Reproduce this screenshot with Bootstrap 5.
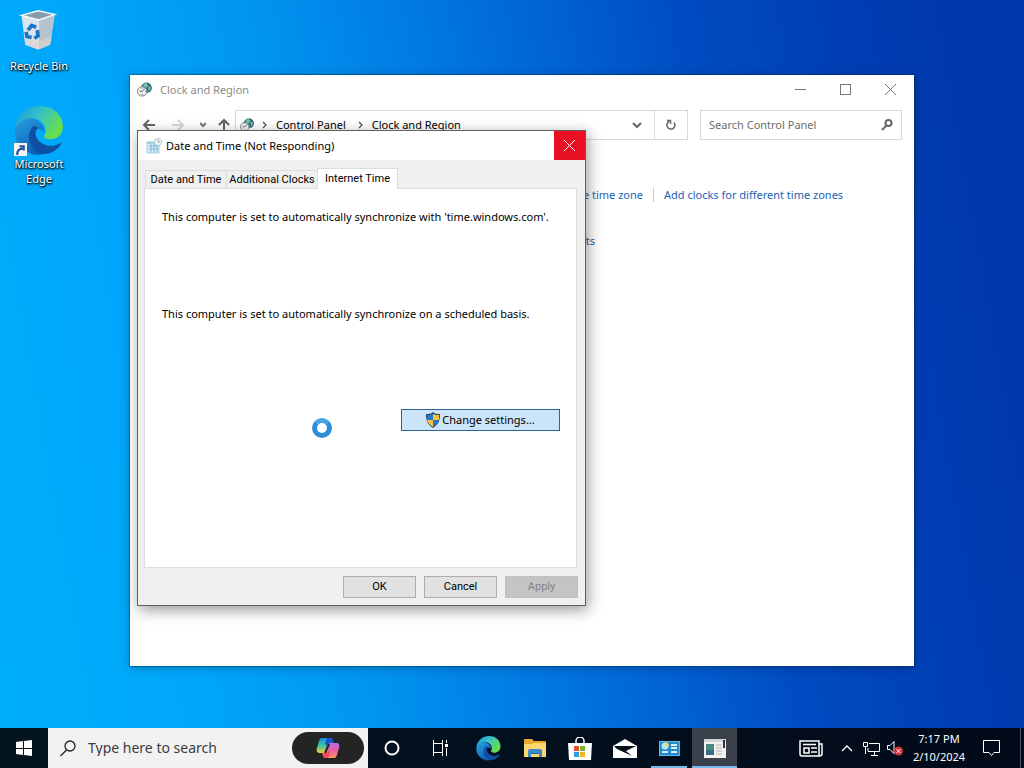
<!DOCTYPE html>
<html lang="en">
<head>
    <meta charset="UTF-8">
    <meta name="viewport" content="width=device-width, initial-scale=1.0">
    <title>Date and Time</title>
    <link href="https://cdn.jsdelivr.net/npm/bootstrap@5.3.0/dist/css/bootstrap.min.css" rel="stylesheet">
    <style>
        body {
            font-family: "Noto Sans", "Open Sans", sans-serif;
            font-size: 11px;
            line-height: 16px;
            color: #000;
            background: linear-gradient(80deg, #00b0fa 0%, #00a6fb 18%, #0094f0 34%, #006edc 53%, #004cc2 70%, #003cb2 86%, #0036a8 100%);
        }
        button {
            font: inherit;
            color: inherit;
            background: none;
            border: 0;
            padding: 0;
        }
        svg {
            display: block;
            flex: none;
        }
        .desktop-area {
            min-height: 0;
        }

        /* Desktop shortcuts */
        .shortcuts {
            width: 78px;
            padding-top: 8px;
        }
        .shortcut {
            color: #fff;
            line-height: 15px;
            text-shadow: 1px 1px 2px #000, 0 1px 2px #000;
            text-decoration: none;
        }
        .shortcut-edge {
            margin-top: 33px;
        }

        /* Windows */
        .win {
            position: absolute;
            background: #fff;
        }
        .win-explorer {
            left: 130px;
            top: 75px;
            width: 784px;
            height: 591px;
            box-shadow: 0 0 1px 1px rgba(0, 40, 90, .35), 0 2px 10px rgba(0, 0, 0, .25);
        }
        .win-dialog {
            left: 137px;
            top: 130px;
            width: 449px;
            height: 476px;
            border: 1px solid #5f5f5f;
            background: #f0f0f0;
            box-shadow: 2px 4px 14px rgba(0, 0, 0, .4);
        }
        .win-explorer .caption {
            height: 29px;
            padding: 0 1px 0 7px;
            color: #8c8c8c;
        }
        .caption-btn {
            width: 45px;
            height: 29px;
        }
        .nav-row {
            height: 41px;
            padding: 6px 12px 5px 10px;
        }
        .nav-arrows {
            width: 95px;
        }
        .address, .search-box {
            border: 1px solid #d9d9d9;
            height: 30px;
        }
        .search-box {
            width: 202px;
        }
        .search-box input {
            border: 0;
            outline: 0;
            min-width: 0;
            padding: 0;
        }
        .search-box input::placeholder {
            color: #6d6d6d;
            opacity: 1;
        }
        .refresh {
            width: 33px;
            border-left: 1px solid #d9d9d9;
        }
        .tasks {
            padding-top: 42px;
        }
        .tasks a {
            color: #1a62b5;
            text-decoration: none;
        }
        .task-zone {
            width: 513px;
        }
        .task-region {
            width: 465px;
            padding-top: 30px;
        }
        .task-divider {
            border-left: 1px solid #ccc;
            height: 14px;
            margin: 0 10px;
        }

        /* Dialog */
        .win-dialog .caption {
            height: 29px;
            background: #fff;
        }
        .close-red {
            width: 31px;
            height: 29px;
            background: #e81123;
        }
        .dialog-body {
            padding: 8px 7px 8px 6px;
        }
        .tab-strip, .push {
            font-family: Roboto, "Noto Sans", sans-serif;
        }
        .tab-strip {
            height: 20px;
            padding-left: 1px;
        }
        .tab-strip button {
            height: 18px;
            border: 1px solid #dcdcdc;
            border-bottom: 0;
            border-right: 0;
            line-height: 18px;
            white-space: nowrap;
        }
        .tab-strip .current {
            width: 81px;
            height: 21px;
            background: #fff;
            border-right: 1px solid #dcdcdc;
            z-index: 1;
            margin-bottom: -1px;
        }
        .tab-one {
            width: 81px;
        }
        .tab-two {
            width: 91px;
        }
        .sheet {
            background: #fff;
            border: 1px solid #dcdcdc;
            height: 380px;
            margin-right: 1px;
            padding: 20px 16px 0 17px;
        }
        .sheet p {
            margin: 0;
            white-space: nowrap;
        }
        .sheet .schedule {
            margin-top: 81px;
        }
        .btn-shield {
            width: 159px;
            height: 22px;
            margin-top: 87px;
            border: 1px solid #2b6391;
            background: #cce4f7;
            gap: 2px;
        }
        .push {
            width: 73px;
            height: 22px;
            border: 1px solid #adadad;
            background: #e1e1e1;
        }
        .push:disabled {
            background: #c4c4c4;
            border-color: #bfbfbf;
            color: #838383;
        }
        .busy {
            position: absolute;
            left: 312px;
            top: 418px;
            width: 20px;
            height: 20px;
            border: 5px solid #2e8fd8;
            border-top-color: #48a4e6;
            border-radius: 50%;
        }

        /* Taskbar */
        .taskbar {
            height: 40px;
            background: linear-gradient(90deg, #04151f, #03101e 50%, #020a1a);
            color: #fff;
        }
        .task-search {
            width: 320px;
            background: #f2f2f2;
            padding: 0 4px 0 12px;
        }
        .task-search input {
            border: 0;
            outline: 0;
            background: none;
            min-width: 0;
            font-size: 14px;
            padding: 0;
        }
        .task-search input::placeholder {
            color: #3c3c3c;
            opacity: 1;
        }
        .copilot {
            width: 72px;
            height: 32px;
            border-radius: 16px;
            background: #242424;
        }
        .tb-wide {
            width: 48px;
        }
        .tb {
            width: 45px;
        }
        .running {
            box-shadow: inset 0 -2px #76b9ed;
            width: 36px;
            margin: 0 5px 0 4px;
        }
        .focused {
            background: #3a414b;
            box-shadow: inset 0 -2px #76b9ed;
        }
        .tray {
            margin-right: 8px;
        }
        .tray button {
            width: 24px;
        }
        .tray .news {
            width: 48px;
        }
        .tray .clock {
            width: 64px;
            line-height: 18px;
            white-space: nowrap;
        }
        .tray .notices {
            width: 41px;
        }
        .show-desktop {
            border-left: 1px solid #4b5563;
            width: 4px;
        }
    </style>
</head>
<body class="vh-100 d-flex flex-column overflow-hidden">
    <!-- Shared icons -->
    <svg width="0" height="0" class="position-absolute" aria-hidden="true">
        <defs>
            <linearGradient id="edgeTop" x1="0" y1="0" x2="1" y2=".5">
                <stop offset="0" stop-color="#1799d8"/>
                <stop offset=".5" stop-color="#35c1c8"/>
                <stop offset="1" stop-color="#67df4c"/>
            </linearGradient>
            <linearGradient id="edgeLeft" x1="0" y1="0" x2=".6" y2="1">
                <stop offset="0" stop-color="#2ba4e4"/>
                <stop offset="1" stop-color="#0b5cb5"/>
            </linearGradient>
            <symbol id="edge" viewBox="0 0 48 48">
                <path fill="url(#edgeLeft)" d="M1 21C3 11 14 9 22 14c5 3 7 7 7 11-3-4-9-4-11 1-3 8 3 16 12 19-4 2-10 3-15 0C5 41-1 31 1 21z"/>
                <path fill="#0f4fa3" d="M17 21c-6 10-1 22 10 25 8 1 15-4 18-9 1-1 0-2-1-1-9 5-20 1-23-7-1-3 0-6 2-8-2-2-5-2-6 0z"/>
                <path fill="url(#edgeTop)" d="M1 21C3 7 14 0 25 0c13 0 22 9 22 20 0 8-6 12-12 12-5 0-7-2-6-4 2-2 2-7-1-11C22 9 8 9 1 21z"/>
            </symbol>
            <symbol id="globeClock" viewBox="0 0 16 16">
                <circle cx="10" cy="6" r="5.500" fill="#2d7890"/>
                <path d="M7 2l3-1 2 2-2 3-3-1zM12 5l3-1v5l-2 1z" fill="#7cc0a6"/>
                <path d="M11 1a6 6 0 0 1 4 7l-2 3" stroke="#23485b" fill="none"/>
                <circle cx="5.500" cy="10" r="5" fill="#eef2f3" stroke="#727b80"/>
                <path d="M5.500 10l3-3M5.500 10H3M5.500 6v1M5.500 13v1M9 10h1" stroke="#4b5054" fill="none"/>
            </symbol>
        </defs>
    </svg>

    <main class="desktop-area flex-grow-1">
        <div class="shortcuts d-flex flex-column text-center">
            <a href="#" class="shortcut d-flex flex-column align-items-center">
                <svg width="42" height="46" viewBox="0 0 44 50">
                    <path d="M3 8l18-5 18 4-5 33-13 5L7 40z" fill="#dce5ec"/>
                    <path d="M22 12l17-5-5 33-12 5z" fill="#b7c4ce"/>
                    <path d="M3 8l18-5 18 4-17 6z" fill="#879dac" stroke="#f6fafc" stroke-width="1.500"/>
                    <path d="M6 31l16 5 14-5-2 9-13 5-14-5z" fill="#d9d3d0" opacity=".7"/>
                    <g fill="none" stroke="#1976c9" stroke-width="4">
                        <path d="M10 24l4-5 5 2"/>
                        <path d="M20 24l1 6-4 3"/>
                        <path d="M14 32l-5-1-1-5"/>
                    </g>
                </svg>
                <span class="pt-1">Recycle Bin</span>
            </a>
            <a href="#" class="shortcut shortcut-edge d-flex flex-column align-items-center">
                <span class="position-relative">
                    <svg width="50" height="50"><use href="#edge"/></svg>
                    <svg class="position-absolute bottom-0 start-0" width="13" height="13" viewBox="0 0 12 12">
                        <path fill="#f4f4f4" d="M0 0h12v12H0z"/>
                        <path fill="none" stroke="#24559b" stroke-width="2" d="M3 11c0-4 1-5 5-6M5 3h4v4"/>
                    </svg>
                </span>
                <span>Microsoft<br>Edge</span>
            </a>
        </div>

        <!-- Control Panel window -->
        <section class="win win-explorer">
            <header class="caption d-flex align-items-center">
                <svg class="me-2" width="15" height="15"><use href="#globeClock"/></svg>
                <span class="flex-grow-1">Clock and Region</span>
                <button class="caption-btn d-flex align-items-center justify-content-center" aria-label="Minimize">
                    <svg width="11" height="11"><path d="M0 5.500h11" stroke="#777"/></svg>
                </button>
                <button class="caption-btn d-flex align-items-center justify-content-center" aria-label="Maximize">
                    <svg width="11" height="11"><rect x=".5" y=".5" width="10" height="10" fill="none" stroke="#777"/></svg>
                </button>
                <button class="caption-btn d-flex align-items-center justify-content-center" aria-label="Close">
                    <svg width="11" height="11"><path d="M0 0l11 11M11 0L0 11" stroke="#777"/></svg>
                </button>
            </header>
            <div class="nav-row d-flex">
                <div class="nav-arrows d-flex align-items-center">
                    <button class="me-3" aria-label="Back"><svg width="16" height="14" viewBox="0 0 16 14"><path d="M15 7H4M9 2L4 7l5 5" fill="none" stroke="#666" stroke-width="2"/></svg></button>
                    <button class="me-3" aria-label="Forward"><svg width="12" height="14" viewBox="0 0 12 14"><path d="M0 7h11M6 2l5 5-5 5" fill="none" stroke="#d6d6d6" stroke-width="2"/></svg></button>
                    <button class="me-2 pe-1" aria-label="Recent"><svg width="6" height="14" viewBox="0 0 6 14"><path d="M0 5l3 3 3-3" fill="none" stroke="#777" stroke-width="2"/></svg></button>
                    <button aria-label="Up"><svg width="12" height="14" viewBox="0 0 12 14"><path d="M6 14V2M1 7l5-5 5 5" fill="none" stroke="#666" stroke-width="2"/></svg></button>
                </div>
                <div class="address d-flex flex-grow-1 align-items-center me-2">
                    <svg width="14" height="16" viewBox="0 0 16 16" class="ms-1 me-2"><use href="#globeClock"/></svg>
                    <svg width="6" height="8" class="me-2"><path d="M1 1l3 3-3 3" fill="none" stroke="#555" stroke-width="1.300"/></svg>
                    <span class="me-2">Control Panel</span>
                    <svg width="6" height="8" class="ms-1 me-2"><path d="M1 1l3 3-3 3" fill="none" stroke="#555" stroke-width="1.300"/></svg>
                    <span class="flex-grow-1">Clock and Region</span>
                    <button class="me-2 pe-1" aria-label="Previous locations"><svg width="10" height="8"><path d="M1 2l4 4 4-4" fill="none" stroke="#666" stroke-width="2"/></svg></button>
                    <button class="refresh h-100 d-flex align-items-center justify-content-center" aria-label="Refresh">
                        <svg width="12" height="12" viewBox="0 0 12 12"><path d="M9 3.500A4 4 0 1 1 4 2.500M2 1.500h3.500V5" fill="none" stroke="#666" stroke-width="1.500"/></svg>
                    </button>
                </div>
                <div class="search-box d-flex align-items-center px-2 ms-1">
                    <input type="text" class="flex-grow-1" placeholder="Search Control Panel" aria-label="Search Control Panel">
                    <svg width="12" height="12" viewBox="0 0 12 12"><circle cx="7.500" cy="4" r="3" fill="none" stroke="#666" stroke-width="2"/><path d="M5.500 6.500L1 11" stroke="#666" stroke-width="2"/></svg>
                </div>
            </div>
            <div class="tasks">
                <div class="d-flex align-items-center">
                    <div class="task-zone text-end"><a href="#">Change the time zone</a></div>
                    <span class="task-divider"></span>
                    <a href="#">Add clocks for different time zones</a>
                </div>
                <div class="task-region text-end"><a href="#">Change date, time, or number formats</a></div>
            </div>
        </section>

        <!-- Date and Time dialog -->
        <section class="win win-dialog">
            <header class="caption d-flex align-items-center">
                <svg class="ms-2 me-1" width="16" height="16" viewBox="0 0 16 16">
                    <path d="M1 4h12v11H1z" fill="#d8edf7" stroke="#9fcbdf"/>
                    <path d="M1 5h11M3 8h9M3 11h9M5 6v8M8 6v8M11 6v8" stroke="#7cbbd8"/>
                    <circle cx="12" cy="4" r="3.500" fill="#f4f8fa" stroke="#b0c5cf"/>
                    <path d="M12 2v2h2" fill="none" stroke="#8aa2ad"/>
                </svg>
                <span class="flex-grow-1">Date and Time (Not Responding)</span>
                <button class="close-red d-flex align-items-center justify-content-center" aria-label="Close">
                    <svg width="11" height="11"><path d="M0 0l11 11M11 0L0 11" stroke="#fff"/></svg>
                </button>
            </header>
            <div class="dialog-body">
                <div class="tab-strip d-flex align-items-end">
                    <button class="tab-one">Date and Time</button>
                    <button class="tab-two">Additional Clocks</button>
                    <button class="current">Internet Time</button>
                </div>
                <div class="sheet">
                    <p>This computer is set to automatically synchronize with 'time.windows.com'.</p>
                    <p class="schedule">This computer is set to automatically synchronize on a scheduled basis.</p>
                    <button class="btn-shield ms-auto d-flex align-items-center justify-content-center">
                        <svg width="14" height="16" viewBox="0 0 14 16">
                            <path d="M7 0c2 2 4 2 7 2 0 6-1 10-7 14C1 12 0 8 0 2c3 0 5 0 7-2z" fill="#27466b"/>
                            <path d="M7 2v6H1V3c2 0 4 0 6-1zM7 8h6c-1 3-3 5-6 7z" fill="#2878c8"/>
                            <path d="M7 2c2 1 4 1 6 1v5H7zM1 8h6v7C3 12 2 11 1 8z" fill="#f7c341"/>
                        </svg>
                        <span>Change settings...</span>
                    </button>
                </div>
                <div class="d-flex justify-content-end gap-2 pt-2">
                    <button class="push">OK</button>
                    <button class="push">Cancel</button>
                    <button class="push" disabled>Apply</button>
                </div>
            </div>
        </section>
        <div class="busy" role="status" aria-label="Busy"></div>
    </main>

    <footer class="taskbar d-flex align-items-stretch flex-shrink-0">
        <button class="tb-wide d-flex align-items-center justify-content-center" aria-label="Start">
            <svg width="16" height="16" viewBox="0 0 16 16"><path fill="#fff" d="M0 2l7-1v7H0zM8 1l8-1v8H8zM0 9h7v6l-7-1zM8 9h8v7l-8-1z"/></svg>
        </button>
        <div class="task-search d-flex align-items-center">
            <svg class="me-2" width="16" height="17" viewBox="0 0 16 17"><circle cx="10" cy="6" r="5" fill="none" stroke="#222" stroke-width="1.300"/><path d="M6.500 10l-6 6" stroke="#222" stroke-width="1.300"/></svg>
            <input type="text" class="flex-grow-1 ms-1" placeholder="Type here to search" aria-label="Search">
            <button class="copilot d-flex align-items-center justify-content-center" aria-label="Copilot">
                <svg width="24" height="22" viewBox="0 0 24 22">
                    <defs>
                        <linearGradient id="copA" x2="0" y2="1"><stop stop-color="#1a8cf0"/><stop offset=".5" stop-color="#3cc4a0"/><stop offset="1" stop-color="#f5c932"/></linearGradient>
                        <linearGradient id="copB" x2="0" y2="1"><stop stop-color="#b56cf0"/><stop offset=".5" stop-color="#f05c9c"/><stop offset="1" stop-color="#ff9860"/></linearGradient>
                    </defs>
                    <path d="M6 1h10l-5 15H4c-3 0-4-2-3-5l2-7c1-2 1-3 3-3z" fill="url(#copA)"/>
                    <path d="M18 21H8l5-15h7c3 0 4 2 3 5l-2 7c-1 2-1 3-3 3z" fill="url(#copB)"/>
                    <path d="M11 1h4c2 0 2 2 3 5h-4c-2 0-2 1-3 3l-2-2z" fill="#1b51c5"/>
                    <path d="M6 16h4c2 0 2-1 3-3l1 3-2 5H9c-2 0-2-2-3-5z" fill="#f34d59"/>
                    <path d="M13 7l-4 9" stroke="#242424" stroke-width="2"/>
                </svg>
            </button>
        </div>
        <button class="tb-wide d-flex align-items-center justify-content-center" aria-label="Cortana">
            <svg width="16" height="16"><circle cx="8" cy="8" r="6.500" fill="none" stroke="#fff" stroke-width="2"/></svg>
        </button>
        <button class="tb-wide d-flex align-items-center justify-content-center" aria-label="Task View">
            <svg width="17" height="16" viewBox="0 0 17 16"><path d="M1.500 0v3.500h9V0M1.500 16v-3.500h9V16M1.500 3.500h9v9h-9zM14.500 0v3M14.500 8v8" fill="none" stroke="#fff"/><path d="M13 4h3v3h-3z" fill="#fff"/></svg>
        </button>
        <button class="tb-wide d-flex align-items-center justify-content-center" aria-label="Microsoft Edge">
            <svg width="25" height="25"><use href="#edge"/></svg>
        </button>
        <button class="tb d-flex align-items-center justify-content-center" aria-label="File Explorer">
            <svg width="22" height="19" viewBox="0 0 22 19">
                <path d="M0 1q0-1 1-1h7l2 2h11q1 0 1 1v14H0z" fill="#e8a92c"/>
                <path d="M0 5h8l2-1h12v14H0z" fill="#fbd76f"/>
                <path d="M4 18v-6q0-2 2-2h10q2 0 2 2v6h-3v-4H7v4z" fill="#3d8ac8"/>
                <path d="M7 14h8v1H7z" fill="#256aa5"/>
            </svg>
        </button>
        <button class="tb d-flex align-items-center justify-content-center" aria-label="Microsoft Store">
            <svg width="24" height="23" viewBox="0 0 24 23">
                <path d="M8 7V4a4 4 0 0 1 8 0v3" fill="none" stroke="#fff" stroke-width="1.500"/>
                <path d="M0 6h24l-1 17H1z" fill="#fff"/>
                <path d="M6 9h5v5H6z" fill="#e74f2a"/><path d="M12 9h5v5h-5z" fill="#78b42a"/>
                <path d="M6 15h5v5H6z" fill="#2e9ee2"/><path d="M12 15h5v5h-5z" fill="#f7b51c"/>
            </svg>
        </button>
        <button class="tb d-flex align-items-center justify-content-center" aria-label="Mail">
            <svg width="24" height="19" viewBox="0 0 24 19"><path d="M0 7l12-7 12 7v12H0z" fill="#fff"/><path d="M1 7h22l-10 5 6 5-15-7z" fill="#04101c"/></svg>
        </button>
        <button class="running d-flex align-items-center justify-content-center" aria-label="Control Panel">
            <svg width="21" height="15" viewBox="0 0 21 15">
                <path d="M0 0h21v15H0z" fill="#58baf0"/><path d="M1 1h19v13H1z" fill="#278acb"/>
                <circle cx="6" cy="5" r="3.500" fill="#b7e9fb"/><path d="M6 5V1a4 4 0 0 1 4 4z" fill="#f8d55c"/>
                <path d="M12 4h6M12 7h6M12 11h6M3 11h6" stroke="#d7f3ff" stroke-width="2"/>
            </svg>
        </button>
        <button class="tb focused d-flex align-items-center justify-content-center" aria-label="Date and Time">
            <svg width="22" height="19" viewBox="0 0 22 19">
                <path d="M0 0h22v19H0z" fill="#f1f1f1"/><path d="M0 0h22v3H0z" fill="#cfd5d9"/>
                <path d="M2 5h8v11H2z" fill="#4b8c81"/><path d="M2 11h8v5H2z" fill="#3a6886"/>
                <path d="M12 6h6M12 9h6M12 12h6M12 15h6" stroke="#b3b3b3"/><path d="M20 1v8" stroke="#333" stroke-width="2"/>
            </svg>
        </button>
        <div class="tray d-flex ms-auto">
            <button class="news d-flex align-items-center justify-content-center" aria-label="News">
                <svg width="24" height="17" viewBox="0 0 24 17"><path d="M1 1h19v15H3q-2 0-2-2zM20 4h3v10q0 2-3 2M4 4.500h13M5 8h5v5H5zM12 8h6M12 12h6" fill="none" stroke="#fff" stroke-width="1.500"/></svg>
            </button>
            <button class="d-flex align-items-center justify-content-center" aria-label="Hidden icons">
                <svg width="12" height="8"><path d="M1 7l5-5 5 5" fill="none" stroke="#fff" stroke-width="1.300"/></svg>
            </button>
            <button class="d-flex align-items-center justify-content-center" aria-label="Network">
                <svg width="17" height="15" viewBox="0 0 17 15"><path d="M6 2.500h10.500v8H5V7M8 14.500h7M11.500 10v4M.5 1.500h4v4h-4zM2.500 5v8" fill="none" stroke="#fff"/></svg>
            </button>
            <button class="d-flex align-items-center justify-content-center" aria-label="Volume muted">
                <svg width="16" height="16" viewBox="0 0 16 16"><path d="M.5 5.500H3l4-4v12l-4-4H.5z" fill="none" stroke="#fff"/><circle cx="11.500" cy="11" r="4.500" fill="#cf343b"/><path d="M9.500 9l4 4M13.500 9l-4 4" stroke="#fff"/></svg>
            </button>
            <button class="clock">7:17 PM<br>2/10/2024</button>
            <button class="notices d-flex align-items-center justify-content-center" aria-label="Notifications">
                <svg width="17" height="16" viewBox="0 0 17 16"><path d="M.5.500h16v12H11l-2.500 3-2.500-3H.5z" fill="none" stroke="#fff"/></svg>
            </button>
        </div>
        <button class="show-desktop" aria-label="Show desktop"></button>
    </footer>

    <script src="https://cdn.jsdelivr.net/npm/bootstrap@5.3.0/dist/js/bootstrap.bundle.min.js"></script>
</body>
</html>
